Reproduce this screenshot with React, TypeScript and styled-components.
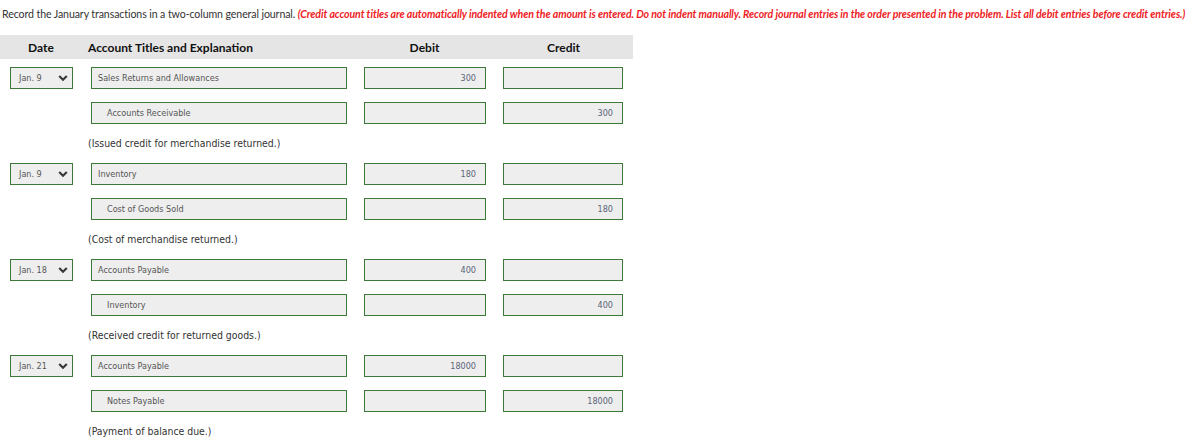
import React from 'react';
import styled, { createGlobalStyle } from 'styled-components';

const GlobalStyle = createGlobalStyle`
  body {
    margin: 0;
    background: #ffffff;
    font-family: Lato, "Liberation Sans", sans-serif;
    color: #333333;
  }
`;

const Page = styled.div`
  width: 1197px;
  height: 440px;
  overflow: hidden;
`;

const Instructions = styled.p`
  margin: 0;
  padding: 8px 0 0 2px;
  height: 27px;
  box-sizing: border-box;
  font-size: 10.6px;
  line-height: 13px;
  color: #333333;
  white-space: nowrap;
  letter-spacing: -0.1px;
`;

const Note = styled.span`
  color: #ee1c25;
  font-weight: 700;
  font-style: italic;
`;

const Journal = styled.div`
  width: 633px;
  margin-top: 8px;
`;

const Cols = styled.div`
  display: grid;
  grid-template-columns: 82px 273px 139px 139px;
`;

const Header = styled(Cols)`
  height: 24px;
  background: #e5e5e5;
  align-items: center;
  font-size: 12px;
  font-weight: 700;
  color: #111111;
`;

const HeadCell = styled.div<{ $align?: 'left' | 'center' }>`
  text-align: ${(p) => p.$align || 'center'};
  padding-left: ${(p) => (p.$align === 'left' ? '6px' : '0')};
`;

const Entry = styled.div`
  padding: 8px 0 2px;
`;

const Lines = styled.div`
  display: flex;
  flex-direction: column;
  gap: 13px;
`;

const Line = styled(Cols)`
  height: 22px;
  align-items: stretch;
`;

const Cell = styled.div<{ $first?: boolean }>`
  padding-left: ${(p) => (p.$first ? '10px' : '9px')};
  display: flex;
`;

const Field = styled.div<{ $width: number; $right?: boolean; $indent?: boolean }>`
  width: ${(p) => p.$width}px;
  height: 22px;
  box-sizing: border-box;
  border: 1.5px solid #3d7a3a;
  background: #eeeeee;
  display: flex;
  align-items: center;
  justify-content: ${(p) => (p.$right ? 'flex-end' : 'flex-start')};
  padding: ${(p) => (p.$right ? '0 9px 0 0' : p.$indent ? '0 0 0 15px' : '0 0 0 6px')};
  font-family: "DejaVu Sans", Verdana, sans-serif;
  font-size: 8.1px;
  color: #555555;
`;

const Amount = styled.span`
  color: #5a6478;
`;

const Select = styled(Field)`
  justify-content: space-between;
  padding: 0 4px 0 8px;
`;

const Chevron = styled.svg`
  width: 10px;
  height: 8px;
`;

const Explanation = styled.div`
  margin-left: 88px;
  margin-top: 9px;
  height: 20px;
  font-family: "DejaVu Sans Condensed", "DejaVu Sans", sans-serif;
  font-size: 10.4px;
  line-height: 20px;
  color: #333333;
`;

type Row = { account: string; debit?: string; credit?: string };
type JournalEntry = { date: string; rows: Row[]; note: string };

const entries: JournalEntry[] = [
  {
    date: 'Jan. 9',
    rows: [
      { account: 'Sales Returns and Allowances', debit: '300' },
      { account: 'Accounts Receivable', credit: '300' },
    ],
    note: '(Issued credit for merchandise returned.)',
  },
  {
    date: 'Jan. 9',
    rows: [
      { account: 'Inventory', debit: '180' },
      { account: 'Cost of Goods Sold', credit: '180' },
    ],
    note: '(Cost of merchandise returned.)',
  },
  {
    date: 'Jan. 18',
    rows: [
      { account: 'Accounts Payable', debit: '400' },
      { account: 'Inventory', credit: '400' },
    ],
    note: '(Received credit for returned goods.)',
  },
  {
    date: 'Jan. 21',
    rows: [
      { account: 'Accounts Payable', debit: '18000' },
      { account: 'Notes Payable', credit: '18000' },
    ],
    note: '(Payment of balance due.)',
  },
];

function DateSelect({ value }: { value: string }) {
  return (
    <Select $width={63}>
      <span>{value}</span>
      <Chevron viewBox="0 0 10 8">
        <path d="M1.2 2 L5 5.8 L8.8 2" fill="none" stroke="#3a3a3a" strokeWidth="2.2" />
      </Chevron>
    </Select>
  );
}

export default function App() {
  return (
    <>
      <GlobalStyle />
      <Page>
        <Instructions>
          Record the January transactions in a two-column general journal.{' '}
          <Note>
            (Credit account titles are automatically indented when the amount is entered. Do not indent
            manually. Record journal entries in the order presented in the problem. List all debit entries
            before credit entries.)
          </Note>
        </Instructions>
        <Journal>
          <Header>
            <HeadCell>Date</HeadCell>
            <HeadCell $align="left">Account Titles and Explanation</HeadCell>
            <HeadCell>Debit</HeadCell>
            <HeadCell>Credit</HeadCell>
          </Header>
          {entries.map((entry, i) => (
            <Entry key={i}>
              <Lines>
                {entry.rows.map((row, j) => (
                  <Line key={j}>
                    <Cell $first>{j === 0 && <DateSelect value={entry.date} />}</Cell>
                    <Cell>
                      <Field $width={256} $indent={j > 0}>
                        {row.account}
                      </Field>
                    </Cell>
                    <Cell>
                      <Field $width={122} $right>
                        <Amount>{row.debit}</Amount>
                      </Field>
                    </Cell>
                    <Cell>
                      <Field $width={120} $right>
                        <Amount>{row.credit}</Amount>
                      </Field>
                    </Cell>
                  </Line>
                ))}
              </Lines>
              <Explanation>{entry.note}</Explanation>
            </Entry>
          ))}
        </Journal>
      </Page>
    </>
  );
}
